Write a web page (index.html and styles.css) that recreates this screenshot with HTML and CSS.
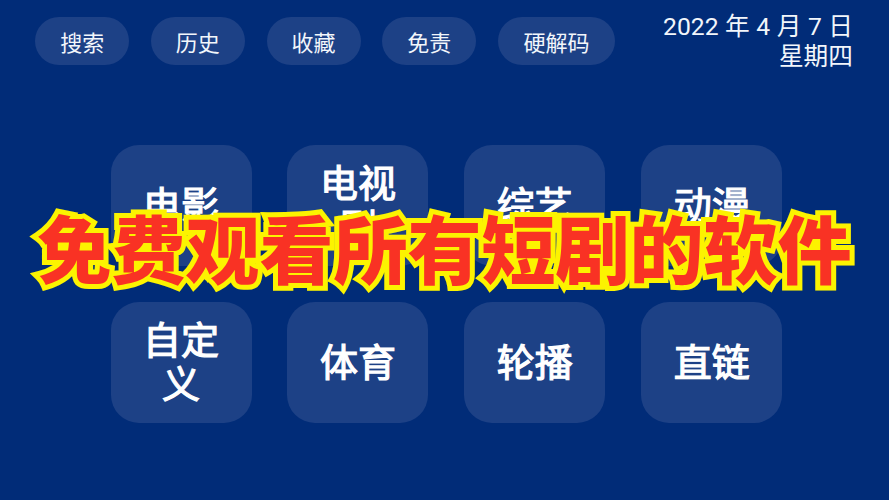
FILE: index.html
```html
<!DOCTYPE html>
<html lang="zh-CN">
<head>
<meta charset="utf-8">
<title>免费观看所有短剧的软件</title>
<link rel="stylesheet" href="styles.css">
</head>
<body>
<main class="screen">
  <header class="topbar">
    <nav class="nav">
      <a class="pill">搜索</a>
      <a class="pill">历史</a>
      <a class="pill">收藏</a>
      <a class="pill">免责</a>
      <a class="pill pill-wide">硬解码</a>
    </nav>
    <div class="clock">
      <div>2022 年 4 月 7 日</div>
      <div>星期四</div>
    </div>
  </header>
  <section class="grid">
    <a class="card">电影</a>
    <a class="card">电视剧</a>
    <a class="card">综艺</a>
    <a class="card">动漫</a>
    <a class="card">自定义</a>
    <a class="card">体育</a>
    <a class="card">轮播</a>
    <a class="card">直链</a>
  </section>
  <h1 class="headline">免费观看所有短剧的软件</h1>
</main>
</body>
</html>
```
FILE: styles.css
```css
* { box-sizing: border-box; }
html, body { margin: 0; padding: 0; }
body {
  width: 889px;
  height: 500px;
  overflow: hidden;
  background: #012c78;
  color: #f2f6fb;
  font-family: Roboto, "Noto Sans CJK SC", sans-serif;
}
.screen {
  position: relative;
  width: 889px;
  height: 500px;
  padding: 12px 36px 0 35.2px;
}
.topbar {
  display: flex;
  justify-content: space-between;
  align-items: flex-start;
}
.nav {
  display: flex;
  gap: 21.7px;
  margin-top: 5px;
}
.pill {
  display: flex;
  align-items: center;
  justify-content: center;
  width: 94px;
  height: 48px;
  border-radius: 24px;
  background: #1d4186;
  font-size: 22px;
}
.pill-wide { width: 117px; }
.clock {
  text-align: right;
  font-size: 24.7px;
  line-height: 30px;
  word-spacing: 0.4px;
}
.grid {
  display: grid;
  grid-template-columns: repeat(4, 141px);
  grid-auto-rows: 121px;
  gap: 36px 35.9px;
  margin: 73px 0 0 75.35px;
}
.card {
  display: flex;
  align-items: center;
  justify-content: center;
  padding: 0 20px;
  border-radius: 28px;
  background: #1d4186;
  color: #fff;
  font-size: 38px;
  font-weight: 400;
  line-height: 44px;
  text-align: center;
  -webkit-text-stroke: 1.2px #fff;
}
.headline {
  position: absolute;
  left: 0;
  right: 0;
  top: 196px;
  margin: 0;
  text-align: center;
  font-family: "Noto Sans CJK SC", sans-serif;
  font-size: 74px;
  font-weight: 900;
  line-height: 100px;
  white-space: nowrap;
  color: #f93224;
  -webkit-text-stroke: 10px #fcf300;
  paint-order: stroke fill;
}
```
